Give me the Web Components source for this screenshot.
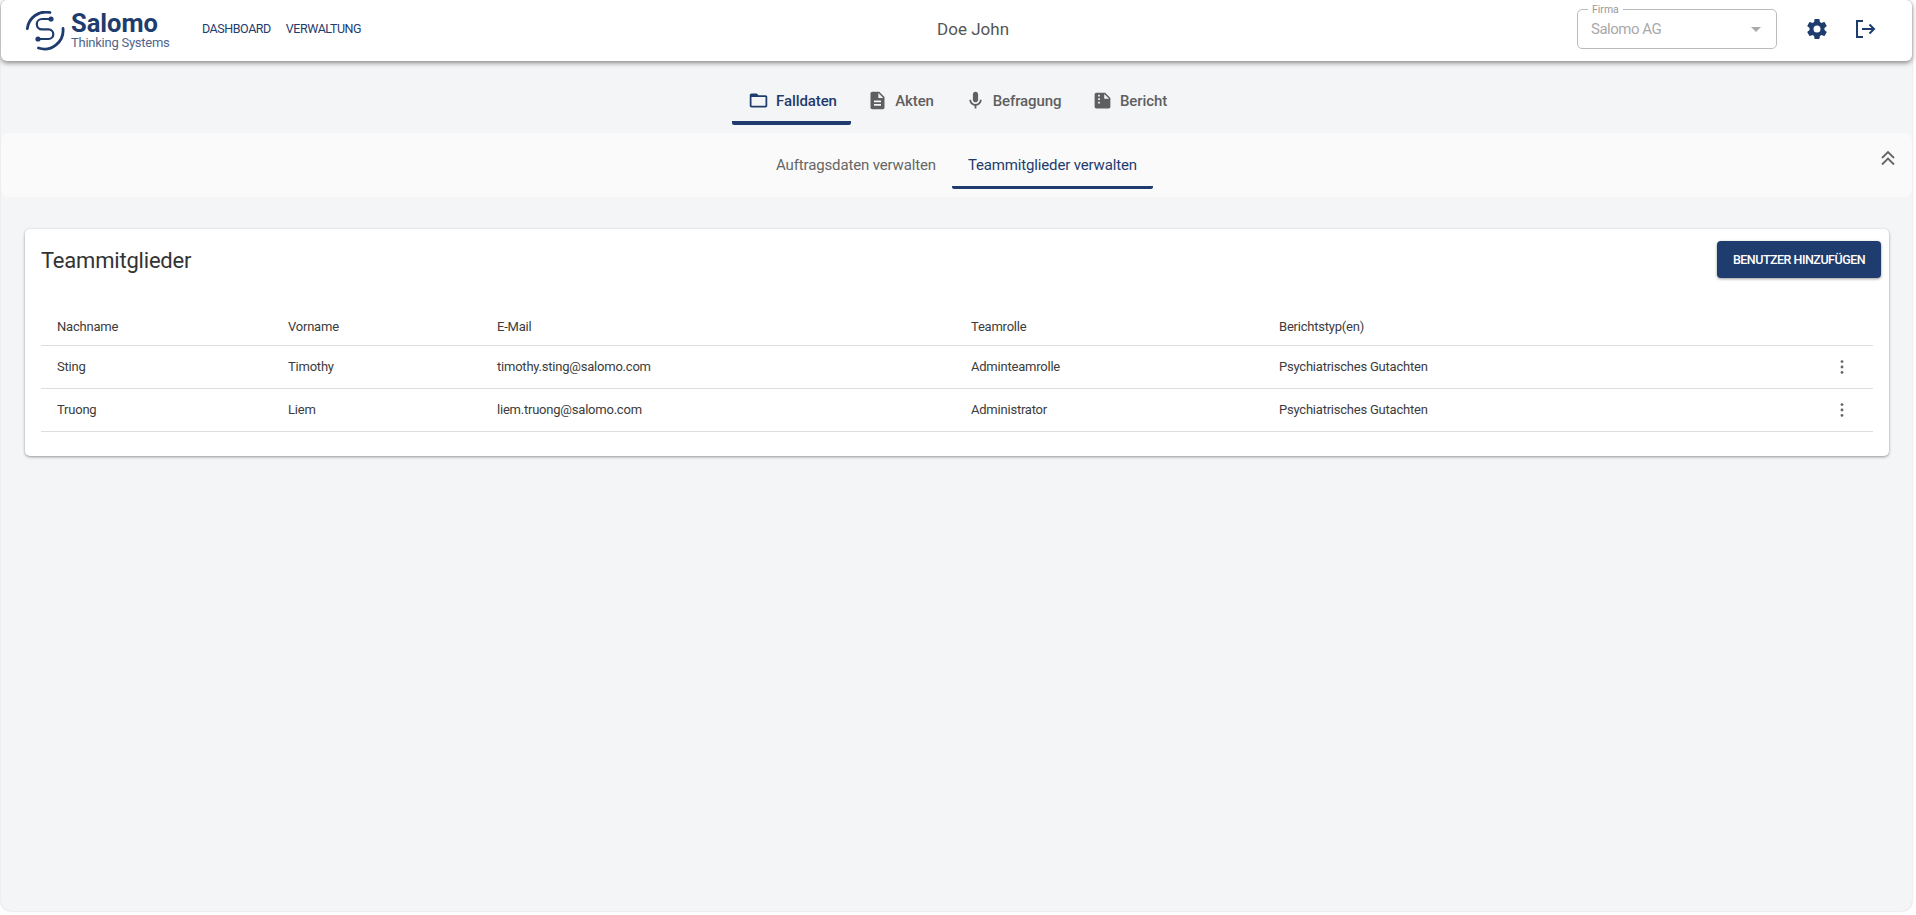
<!DOCTYPE html>
<html lang="de">
<head>
<meta charset="utf-8">
<title>Salomo</title>
<style>
html, body { margin: 0; height: 100%; background: #fff; }
body { font-family: Roboto, "Liberation Sans", sans-serif; color: #333; overflow: hidden; }
</style>
</head>
<body>
<app-shell>
	<app-header slot="header" user="Doe John"></app-header>
	<main-tabs slot="tabs"></main-tabs>
	<sub-tabs slot="subtabs"></sub-tabs>
	<team-card title="Teammitglieder">
		<team-row head last="Nachname" first="Vorname" mail="E-Mail" role="Teamrolle" report="Berichtstyp(en)"></team-row>
		<team-row last="Sting" first="Timothy" mail="timothy.sting@salomo.com" role="Adminteamrolle" report="Psychiatrisches Gutachten"></team-row>
		<team-row last="Truong" first="Liem" mail="liem.truong@salomo.com" role="Administrator" report="Psychiatrisches Gutachten"></team-row>
	</team-card>
</app-shell>

<script>
//Shared colours and icon paths
const NAVY = "#1f3c6e";
const ICONS = {
	folder: "M20 6h-8l-2-2H4c-1.1 0-2 .9-2 2v12c0 1.1.9 2 2 2h16c1.1 0 2-.9 2-2V8c0-1.1-.9-2-2-2zm0 12H4V8h16v10z",
	file: "M14 2H6c-1.1 0-2 .9-2 2v16c0 1.1.9 2 2 2h12c1.1 0 2-.9 2-2V8l-6-6zm2 16H8v-2h8v2zm0-4H8v-2h8v2zm-3-5V3.5L18.5 9H13z",
	mic: "M12 14c1.66 0 3-1.34 3-3V5c0-1.66-1.34-3-3-3S9 3.34 9 5v6c0 1.66 1.34 3 3 3zm5-3c0 2.76-2.24 5-5 5s-5-2.24-5-5H5c0 3.53 2.61 6.43 6 6.92V21h2v-3.08c3.39-.49 6-3.39 6-6.92h-2z",
	report: "M5 3h10l6 6v10c0 1.100-.9 2-2 2H5c-1.100 0-2-.9-2-2V5c0-1.100.9-2 2-2zM14 4.500V10h5.500zM7 5.500v2h2v-2zM7 9.500v2h2v-2zM7 13.500v2h2v-2z",
	cog: "M12,15.5A3.5,3.5 0 0,1 8.5,12A3.5,3.5 0 0,1 12,8.5A3.5,3.5 0 0,1 15.5,12A3.5,3.5 0 0,1 12,15.5M19.43,12.97C19.47,12.65 19.5,12.33 19.5,12C19.5,11.67 19.47,11.34 19.43,11L21.54,9.37C21.73,9.22 21.78,8.95 21.66,8.73L19.66,5.27C19.54,5.05 19.27,4.96 19.05,5.05L16.56,6.05C16.04,5.66 15.5,5.32 14.87,5.07L14.5,2.42C14.46,2.18 14.25,2 14,2H10C9.75,2 9.54,2.18 9.5,2.42L9.13,5.07C8.5,5.32 7.96,5.66 7.44,6.05L4.95,5.05C4.73,4.96 4.46,5.05 4.34,5.27L2.34,8.73C2.21,8.95 2.27,9.22 2.46,9.37L4.57,11C4.53,11.34 4.5,11.67 4.5,12C4.5,12.33 4.53,12.65 4.57,12.97L2.46,14.63C2.27,14.78 2.21,15.05 2.34,15.27L4.34,18.73C4.46,18.95 4.73,19.03 4.95,18.95L7.44,17.94C7.96,18.34 8.5,18.68 9.13,18.93L9.5,21.58C9.54,21.82 9.75,22 10,22H14C14.25,22 14.46,21.82 14.5,21.58L14.87,18.93C15.5,18.67 16.04,18.34 16.56,17.94L19.05,18.95C19.27,19.03 19.54,18.95 19.66,18.73L21.66,15.27C21.78,15.05 21.73,14.78 21.54,14.63L19.43,12.97Z"
};

function icon(name, size) {
	return `<svg width="${size}" height="${size}" viewBox="0 0 24 24" fill="currentColor" fill-rule="evenodd"><path d="${ICONS[name]}"/></svg>`;
}

//Outer frame of the application
class AppShell extends HTMLElement {
	constructor() {
		super();
		this.attachShadow({ mode: "open" });
		this.shadowRoot.innerHTML = `
		<style>
		:host { display: block; }
		#frame {
			width: 1911px;
			height: 911px;
			margin-left: 1px;
			box-sizing: border-box;
			background: #f4f5f7;
			border-radius: 6px 6px 10px 10px;
			box-shadow: 0 0 2px rgba(0,0,0,.25);
			display: flex;
			flex-direction: column;
		}
		#content { padding: 32px 23px 0 24px; }
		</style>
		<div id="frame">
			<slot name="header"></slot>
			<slot name="tabs"></slot>
			<slot name="subtabs"></slot>
			<div id="content"><slot></slot></div>
		</div>`;
	}
}

class AppHeader extends HTMLElement {
	constructor() {
		super();
		this.attachShadow({ mode: "open" });
		this.shadowRoot.innerHTML = `
		<style>
		:host {
			display: flex;
			align-items: center;
			justify-content: space-between;
			height: 61px;
			padding: 0 32px 0 24px;
			background: #fff;
			border-radius: 6px;
			box-shadow: 0 2px 5px rgba(0,0,0,.45);
			position: relative;
		}
		#left, #right, #logo, nav { display: flex; align-items: center; }
		#logo svg { display: block; margin-right: 6px; }
		#brand { color: ${NAVY}; width: 100px; }
		#brand b { display: block; font-size: 25.5px; line-height: 23px; font-weight: 700; }
		#brand span { display: block; font-size: 13px; line-height: 15px; letter-spacing: -.25px; opacity: .8; white-space: nowrap; }
		nav { margin: -4px 0 0 31px; gap: 15px; color: ${NAVY}; font-size: 12.5px; letter-spacing: -.45px; }
		#user { font-size: 17px; color: #555; margin: -4px 0 0 8px; }
		#right { margin-top: -4px; }
		fieldset {
			box-sizing: border-box;
			width: 200px;
			height: 45px;
			margin: -4px 0 0;
			padding: 0 13px 5px;
			border: 1px solid #bbb;
			border-radius: 5px;
			display: flex;
			align-items: center;
			justify-content: space-between;
			color: #a9a9a9;
			font-size: 15px;
			letter-spacing: -.5px;
		}
		legend { font-size: 10.5px; line-height: 11px; letter-spacing: 0; padding: 0 4px; margin-left: -3px; color: #999; }
		#caret { width: 0; height: 0; border: 5px solid transparent; border-top: 5px solid #aaa; border-bottom: 0; margin-right: 2px; }
		#right svg { display: block; }
		#cog { color: ${NAVY}; margin-left: 28px; }
		#exit { color: ${NAVY}; margin: 0 3px 0 24px; }
		</style>
		<div id="left">
			<div id="logo">
				<svg width="40" height="40" viewBox="0 0 40 40" fill="none" stroke="${NAVY}" stroke-width="2.800" stroke-linecap="round">
					<path d="M25 1.500 A18.700 18.700 0 0 0 2.300 17.600"/>
					<path d="M38 17.500 A18.700 18.700 0 0 1 13.500 37"/>
					<path d="M25 8 H17 A5.200 5.200 0 0 0 17 18.400 H23.500 A4.800 4.800 0 0 1 23.500 28 H14" stroke-width="2.200"/>
					<circle cx="26" cy="8" r="2.600" fill="${NAVY}" stroke="none"/>
					<circle cx="13" cy="28" r="2.600" fill="${NAVY}" stroke="none"/>
				</svg>
				<div id="brand"><b>Salomo</b><span>Thinking Systems</span></div>
			</div>
			<nav><span>DASHBOARD</span><span>VERWALTUNG</span></nav>
		</div>
		<div id="user">${this.getAttribute("user")}</div>
		<div id="right">
			<fieldset><legend>Firma</legend><span>Salomo AG</span><i id="caret"></i></fieldset>
			<span id="cog">${icon("cog", 24)}</span>
			<span id="exit">
				<svg width="24" height="24" viewBox="0 0 24 24" fill="none" stroke="currentColor" stroke-width="2">
					<path d="M10 4H4v16h6"/>
					<path d="M9 12h12M16.500 7.500 21 12l-4.500 4.500"/>
				</svg>
			</span>
		</div>`;
	}
}

class MainTabs extends HTMLElement {
	constructor() {
		super();
		this.attachShadow({ mode: "open" });
		const tabs = [["folder", "Falldaten", 119], ["file", "Akten", 97], ["mic", "Befragung", 128], ["report", "Bericht", 105]];
		this.shadowRoot.innerHTML = `
		<style>
		:host { display: flex; justify-content: center; height: 72px; box-sizing: border-box; padding-top: 18px; }
		a {
			box-sizing: border-box;
			height: 46px;
			display: flex;
			align-items: center;
			justify-content: center;
			gap: 7px;
			color: #5f5f5f;
			font-size: 15px;
			font-weight: 500;
			letter-spacing: -.1px;
			padding: 1px 0 0 2px;
			border-bottom: 4px solid transparent;
		}
		a.active { color: ${NAVY}; border-bottom-color: ${NAVY}; border-radius: 2px; }
		svg { display: block; }
		</style>
		${tabs.map((t, i) => `<a class="${i == 0 ? "active" : ""}" style="width:${t[2]}px">${icon(t[0], 21)}<span>${t[1]}</span></a>`).join("")}`;
	}
}

class SubTabs extends HTMLElement {
	constructor() {
		super();
		this.attachShadow({ mode: "open" });
		this.shadowRoot.innerHTML = `
		<style>
		:host {
			display: flex;
			justify-content: center;
			height: 64px;
			background: #fafafa;
			border-radius: 8px;
			position: relative;
		}
		a {
			box-sizing: border-box;
			height: 56px;
			display: flex;
			align-items: center;
			padding: 11px 16px 0;
			font-size: 15px;
			letter-spacing: -.15px;
			color: #666;
			border-bottom: 3px solid transparent;
		}
		a.active { color: ${NAVY}; border-bottom-color: ${NAVY}; border-radius: 2px; }
		svg { position: absolute; right: 15px; top: 16px; color: #666; }
		</style>
		<a>Auftragsdaten verwalten</a>
		<a class="active">Teammitglieder verwalten</a>
		<svg width="18" height="18" viewBox="0 0 18 18" fill="none" stroke="currentColor" stroke-width="1.800"><path d="M3 9 9 3 15 9M3 15.500 9 9.500 15 15.500"/></svg>`;
	}
}

class TeamCard extends HTMLElement {
	constructor() {
		super();
		this.attachShadow({ mode: "open" });
		this.shadowRoot.innerHTML = `
		<style>
		:host {
			display: block;
			height: 227px;
			box-sizing: border-box;
			padding: 12px 8px 0 16px;
			background: #fff;
			border-radius: 5px;
			box-shadow: 0 1px 3px rgba(0,0,0,.4);
		}
		#top { display: flex; justify-content: space-between; align-items: center; height: 37px; margin-bottom: 25px; }
		h2 { margin: 1px 0 0; font-size: 22px; font-weight: 400; letter-spacing: -.2px; color: #333; }
		button {
			width: 164px;
			height: 37px;
			border: 0;
			border-radius: 4px;
			background: ${NAVY};
			color: #fff;
			font: 500 12.5px Roboto, sans-serif;
			letter-spacing: -.5px;
			box-shadow: 0 1px 3px rgba(0,0,0,.4);
		}
		#rows { margin-right: 8px; }
		</style>
		<div id="top"><h2>${this.getAttribute("title")}</h2><button>BENUTZER HINZUFÜGEN</button></div>
		<div id="rows"><slot></slot></div>`;
	}
}

class TeamRow extends HTMLElement {
	constructor() {
		super();
		this.attachShadow({ mode: "open" });
		const cols = ["last", "first", "mail", "role", "report"].map(k => `<span>${this.getAttribute(k)}</span>`).join("");
		const more = this.hasAttribute("head") ? "<span></span>" :
			`<svg width="20" height="20" viewBox="0 0 24 24" fill="#666"><circle cx="12" cy="5.500" r="1.700"/><circle cx="12" cy="12" r="1.700"/><circle cx="12" cy="18.500" r="1.700"/></svg>`;
		this.shadowRoot.innerHTML = `
		<style>
		:host {
			display: grid;
			grid-template-columns: 231px 209px 474px 308px 1fr 20px;
			align-items: center;
			height: 43px;
			box-sizing: border-box;
			padding: 0 21px 1px 16px;
			font-size: 13px;
			letter-spacing: -.22px;
			color: #3c3c3c;
			border-bottom: 1px solid #ddd;
		}
		:host([head]) { padding-top: 4px; padding-bottom: 0; }
		svg { display: block; }
		</style>
		${cols}${more}`;
	}
}

window.customElements.define("app-shell", AppShell);
window.customElements.define("app-header", AppHeader);
window.customElements.define("main-tabs", MainTabs);
window.customElements.define("sub-tabs", SubTabs);
window.customElements.define("team-card", TeamCard);
window.customElements.define("team-row", TeamRow);
</script>
</body>
</html>
